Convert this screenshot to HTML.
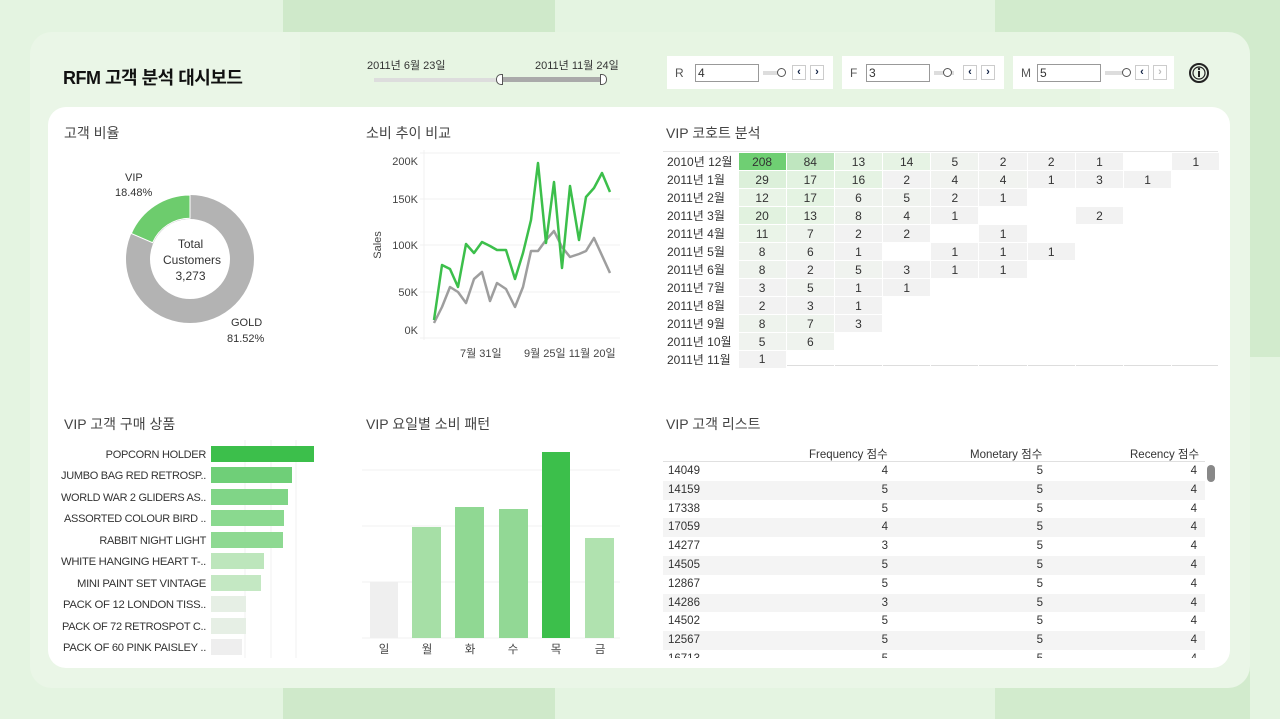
<!DOCTYPE html>
<html><head><meta charset="utf-8"><style>
*{margin:0;padding:0;box-sizing:border-box}
body{width:1280px;height:719px;overflow:hidden;position:relative;background:#dff1db;font-family:"Liberation Sans","Noto Sans CJK KR",sans-serif;color:#333}
.a{position:absolute}
.t{position:absolute;font-size:13px;color:#333;white-space:nowrap}
.h{position:absolute;font-size:14px;color:#444}
.ctrl{position:absolute;background:#fff;top:56px;height:33px}
.ctrl .l{position:absolute;left:8px;top:10px;font-size:12px;color:#555}
.ctrl .in{position:absolute;left:28px;top:8px;width:64px;height:18px;border:1px solid #999;font-size:12px;padding-left:2px;line-height:16px}
.ctrl .sl{position:absolute;left:96px;top:15px;width:20px;height:4px;background:#ddd}
.ctrl .kn{position:absolute;left:110px;top:12px;width:9px;height:9px;border:1px solid #555;border-radius:50%;background:#fff}
.ctrl .b{position:absolute;top:9px;width:14px;height:15px;border:1px solid #ccc;font-size:11px;text-align:center;line-height:13px;color:#124;font-weight:bold}
.coh td{width:48.2px;height:17.8px;text-align:center;font-size:12px;border:1px solid #fff;padding:0}
.coh td.lb{width:75px;text-align:left;padding-left:4px;background:#fff;border:none;border-top:1px solid #fff}
.coh{border-collapse:collapse;position:absolute;left:663px;top:152px}
</style></head><body>
<div class="a" style="left:283px;top:0;width:272px;height:719px;background:#cfe9ca"></div>
<div class="a" style="left:555px;top:0;width:440px;height:719px;background:#e4f4e1"></div>
<div class="a" style="left:995px;top:0;width:285px;height:719px;background:#d2ebcd"></div>
<div class="a" style="left:1250px;top:357px;width:30px;height:362px;background:#e4f4e1"></div>
<div class="a" style="left:0;top:0;width:283px;height:719px;background:#e4f4e1"></div>
<div class="a" style="left:30px;top:32px;width:1220px;height:656px;border-radius:22px;background:#eaf6e7"></div>
<div class="a" style="left:300px;top:32px;width:800px;height:75px;background:#e7f5e3"></div>
<div class="a" style="left:48px;top:107px;width:1182px;height:561px;border-radius:18px;background:#fff"></div>

<div class="t" style="left:63px;top:64px;font-size:18px;color:#111;font-weight:bold;letter-spacing:-0.5px">RFM 고객 분석 대시보드</div>
<div class="t" style="left:367px;top:57px;font-size:11px">2011년 6월 23일</div>
<div class="t" style="left:535px;top:57px;font-size:11px">2011년 11월 24일</div>
<div class="a" style="left:374px;top:78px;width:125px;height:4px;background:#ddd"></div>
<div class="a" style="left:499px;top:77px;width:104px;height:5px;background:#aaa"></div>
<div class="a" style="left:496px;top:74px;width:7px;height:11px;border:1px solid #555;border-radius:5px 0 0 5px;background:#fff"></div>
<div class="a" style="left:600px;top:74px;width:7px;height:11px;border:1px solid #555;border-radius:0 5px 5px 0;background:#fff"></div>

<div class="ctrl" style="left:667px;width:166px"><span class="l">R</span><div class="in">4</div><div class="sl"></div><div class="kn"></div><div class="b" style="left:125px">‹</div><div class="b" style="left:143px">›</div></div>
<div class="ctrl" style="left:842px;width:162px"><span class="l">F</span><div class="in" style="left:24px">3</div><div class="sl" style="left:92px"></div><div class="kn" style="left:101px"></div><div class="b" style="left:121px">‹</div><div class="b" style="left:139px">›</div></div>
<div class="ctrl" style="left:1013px;width:161px"><span class="l">M</span><div class="in" style="left:24px">5</div><div class="sl" style="left:92px"></div><div class="kn" style="left:109px"></div><div class="b" style="left:122px">‹</div><div class="b" style="left:140px;color:#bbb">›</div></div>
<svg class="a" style="left:1188px;top:62px" width="22" height="22"><circle cx="11" cy="11" r="9" fill="none" stroke="#222" stroke-width="2"/><circle cx="11" cy="11" r="6" fill="none" stroke="#222" stroke-width="1.2"/><rect x="10" y="9" width="2" height="6" fill="#222"/><circle cx="11" cy="7" r="1.2" fill="#222"/></svg>

<div class="h" style="left:64px;top:123px">고객 비율</div>
<div class="h" style="left:366px;top:123px">소비 추이 비교</div>
<div class="h" style="left:666px;top:123px">VIP 코호트 분석</div>
<div class="h" style="left:64px;top:414px">VIP 고객 구매 상품</div>
<div class="h" style="left:366px;top:414px">VIP 요일별 소비 패턴</div>
<div class="h" style="left:666px;top:414px">VIP 고객 리스트</div>

<svg class="a" style="left:0;top:0" width="400" height="400">
<circle cx="190" cy="259" r="52" fill="none" stroke="#b3b3b3" stroke-width="24"/>
<path d="M190 195 A64 64 0 0 0 131.3 233.5 L152.6 242.7 A40.8 40.8 0 0 1 190 218.2 Z" fill="#6dcc6d" stroke="#fff" stroke-width="1"/>
</svg>
<div class="t" style="left:125px;top:172px;font-size:11px">VIP</div>
<div class="t" style="left:115px;top:187px;font-size:11px">18.48%</div>
<div class="t" style="left:163px;top:236px;font-size:12px;text-align:center;width:55px;line-height:16px">Total<br>Customers<br>3,273</div>
<div class="t" style="left:231px;top:317px;font-size:11px">GOLD</div>
<div class="t" style="left:227px;top:333px;font-size:11px">81.52%</div>

<svg class="a" style="left:360px;top:140px" width="270" height="230" font-family="Liberation Sans,sans-serif" font-size="11" fill="#444">
<g stroke="#f0f0f0"><line x1="60" y1="13" x2="260" y2="13"/><line x1="60" y1="59" x2="260" y2="59"/><line x1="60" y1="105" x2="260" y2="105"/><line x1="60" y1="152" x2="260" y2="152"/><line x1="60" y1="198" x2="260" y2="198"/><line x1="64" y1="10" x2="64" y2="200"/></g>
<text x="58" y="25" text-anchor="end">200K</text><text x="58" y="63" text-anchor="end">150K</text><text x="58" y="109" text-anchor="end">100K</text><text x="58" y="156" text-anchor="end">50K</text><text x="58" y="194" text-anchor="end">0K</text>
<text transform="translate(21 105) rotate(-90)" text-anchor="middle">Sales</text>
<text x="100" y="217">7월 31일</text><text x="164" y="217">9월 25일 11월 20일</text>
<g transform="translate(-360 -140)" fill="none" stroke-width="2.5" stroke-linejoin="round">
<polyline stroke="#9e9e9e" points="434,323 442,307 450,287 458,292 466,303 474,279 482,272 490,301 497,283 506,289 515,307 523,287 531,251 538,251 546,240 554,231 562,247 570,257 579,254 586,251 594,238 610,273"/>
<polyline stroke="#3cbf4b" points="434,320 442,265 450,269 458,287 466,244 474,253 482,242 490,246 497,250 506,250 515,279 523,253 531,220 538,163 546,243 554,182 562,268 570,186 579,240 586,197 594,188 602,173 610,192"/>
</g>
</svg>

<div class="a" style="left:663px;top:151px;width:555px;height:1px;background:#e4e4e4"></div>
<div class="a" style="left:663px;top:365px;width:555px;height:1px;background:#ddd"></div>
<table class="coh">
<tr><td class="lb">2010년 12월</td><td style="background:#6fcf73">208</td><td style="background:#bfe6bf">84</td><td style="background:#e8f4e6">13</td><td style="background:#e6f3e4">14</td><td style="background:#f0f3ef">5</td><td style="background:#f2f2f2">2</td><td style="background:#f2f2f2">2</td><td style="background:#f2f2f2">1</td><td></td><td style="background:#f2f2f2">1</td></tr>
<tr><td class="lb">2011년 1월</td><td style="background:#dcf0da">29</td><td style="background:#e4f3e2">17</td><td style="background:#e5f3e3">16</td><td style="background:#f2f2f2">2</td><td style="background:#f1f3f0">4</td><td style="background:#f1f3f0">4</td><td style="background:#f2f2f2">1</td><td style="background:#f2f2f2">3</td><td style="background:#f2f2f2">1</td><td></td></tr>
<tr><td class="lb">2011년 2월</td><td style="background:#e9f4e7">12</td><td style="background:#e4f3e2">17</td><td style="background:#eff3ee">6</td><td style="background:#f0f3ef">5</td><td style="background:#f2f2f2">2</td><td style="background:#f2f2f2">1</td><td></td><td></td><td></td><td></td></tr>
<tr><td class="lb">2011년 3월</td><td style="background:#e1f2df">20</td><td style="background:#e8f4e6">13</td><td style="background:#eef3ed">8</td><td style="background:#f1f3f0">4</td><td style="background:#f2f2f2">1</td><td></td><td></td><td style="background:#f2f2f2">2</td><td></td><td></td></tr>
<tr><td class="lb">2011년 4월</td><td style="background:#eaf4e8">11</td><td style="background:#eef3ed">7</td><td style="background:#f2f2f2">2</td><td style="background:#f2f2f2">2</td><td></td><td style="background:#f2f2f2">1</td><td></td><td></td><td></td><td></td></tr>
<tr><td class="lb">2011년 5월</td><td style="background:#eef3ed">8</td><td style="background:#eff3ee">6</td><td style="background:#f2f2f2">1</td><td></td><td style="background:#f2f2f2">1</td><td style="background:#f2f2f2">1</td><td style="background:#f2f2f2">1</td><td></td><td></td><td></td></tr>
<tr><td class="lb">2011년 6월</td><td style="background:#eef3ed">8</td><td style="background:#f2f2f2">2</td><td style="background:#f0f3ef">5</td><td style="background:#f2f2f2">3</td><td style="background:#f2f2f2">1</td><td style="background:#f2f2f2">1</td><td></td><td></td><td></td><td></td></tr>
<tr><td class="lb">2011년 7월</td><td style="background:#f2f2f2">3</td><td style="background:#f0f3ef">5</td><td style="background:#f2f2f2">1</td><td style="background:#f2f2f2">1</td><td></td><td></td><td></td><td></td><td></td><td></td></tr>
<tr><td class="lb">2011년 8월</td><td style="background:#f2f2f2">2</td><td style="background:#f2f2f2">3</td><td style="background:#f2f2f2">1</td><td></td><td></td><td></td><td></td><td></td><td></td><td></td></tr>
<tr><td class="lb">2011년 9월</td><td style="background:#eef3ed">8</td><td style="background:#eef3ed">7</td><td style="background:#f2f2f2">3</td><td></td><td></td><td></td><td></td><td></td><td></td><td></td></tr>
<tr><td class="lb">2011년 10월</td><td style="background:#f0f3ef">5</td><td style="background:#eff3ee">6</td><td></td><td></td><td></td><td></td><td></td><td></td><td></td><td></td></tr>
<tr><td class="lb">2011년 11월</td><td style="background:#f2f2f2">1</td><td></td><td></td><td></td><td></td><td></td><td></td><td></td><td></td><td></td></tr>
</table>

<svg class="a" style="left:50px;top:440px" width="290" height="220" font-family="Liberation Sans,sans-serif" font-size="11" fill="#333">
<g stroke="#f0f0f0"><line x1="195" y1="0" x2="195" y2="218"/><line x1="221" y1="0" x2="221" y2="218"/><line x1="246" y1="0" x2="246" y2="218"/></g>
<rect x="161" y="6" width="103" height="16" fill="#3cbf4b"/>
<rect x="161" y="27" width="81" height="16" fill="#6fcf78"/>
<rect x="161" y="49" width="77" height="16" fill="#80d587"/>
<rect x="161" y="70" width="73" height="16" fill="#8ad98f"/>
<rect x="161" y="92" width="72" height="16" fill="#8ed992"/>
<rect x="161" y="113" width="53" height="16" fill="#bde6bc"/>
<rect x="161" y="135" width="50" height="16" fill="#c4e8c3"/>
<rect x="161" y="156" width="35" height="16" fill="#e6efe5"/>
<rect x="161" y="178" width="35" height="16" fill="#e6efe5"/>
<rect x="161" y="199" width="31" height="16" fill="#eeeeee"/>
<g text-anchor="end" letter-spacing="-0.3"><text x="156" y="18">POPCORN HOLDER</text><text x="156" y="39" textLength="145" lengthAdjust="spacingAndGlyphs">JUMBO BAG RED RETROSP..</text><text x="156" y="61" textLength="145" lengthAdjust="spacingAndGlyphs">WORLD WAR 2 GLIDERS AS..</text><text x="156" y="82" textLength="142" lengthAdjust="spacingAndGlyphs">ASSORTED COLOUR BIRD ..</text><text x="156" y="104">RABBIT NIGHT LIGHT</text><text x="156" y="125" textLength="145" lengthAdjust="spacingAndGlyphs">WHITE HANGING HEART T-..</text><text x="156" y="147" textLength="129" lengthAdjust="spacingAndGlyphs">MINI PAINT SET VINTAGE</text><text x="156" y="168" textLength="143" lengthAdjust="spacingAndGlyphs">PACK OF 12 LONDON TISS..</text><text x="156" y="190" textLength="144" lengthAdjust="spacingAndGlyphs">PACK OF 72 RETROSPOT C..</text><text x="156" y="211" textLength="143" lengthAdjust="spacingAndGlyphs">PACK OF 60 PINK PAISLEY ..</text></g>
</svg>

<svg class="a" style="left:360px;top:440px" width="270" height="225" font-family="Liberation Sans,Noto Sans CJK KR,sans-serif" font-size="11.5" fill="#444">
<g stroke="#f0f0f0"><line x1="2" y1="30" x2="260" y2="30"/><line x1="2" y1="86" x2="260" y2="86"/><line x1="2" y1="142" x2="260" y2="142"/><line x1="2" y1="198" x2="260" y2="198"/></g>
<rect x="10" y="142" width="28" height="56" fill="#efefef"/>
<rect x="52" y="87" width="29" height="111" fill="#a6dfa6"/>
<rect x="95" y="67" width="29" height="131" fill="#90d893"/>
<rect x="139" y="69" width="29" height="129" fill="#92d895"/>
<rect x="182" y="12" width="28" height="186" fill="#3cbf4b"/>
<rect x="225" y="98" width="29" height="100" fill="#b0e2af"/>
<g text-anchor="middle"><text x="24" y="213">일</text><text x="67" y="213">월</text><text x="110" y="213">화</text><text x="153" y="213">수</text><text x="196" y="213">목</text><text x="240" y="213">금</text></g>
</svg>

<div class="t" style="left:809px;top:446px;font-size:11.5px">Frequency 점수</div>
<div class="t" style="left:970px;top:446px;font-size:11.5px">Monetary 점수</div>
<div class="t" style="left:1130px;top:446px;font-size:11.5px">Recency 점수</div>
<div class="a" style="left:663px;top:461px;width:542px;height:1px;background:#e0e0e0"></div>
<div class="a" style="left:1207px;top:465px;width:8px;height:17px;border-radius:4px;background:#888"></div>
<div class="a" style="left:663px;top:462px;width:542px;height:196px;overflow:hidden;font-size:11.5px;color:#333">
<div style="position:relative">
<script>
var d=[["14049",4,5,4],["14159",5,5,4],["17338",5,5,4],["17059",4,5,4],["14277",3,5,4],["14505",5,5,4],["12867",5,5,4],["14286",3,5,4],["14502",5,5,4],["12567",5,5,4],["16713",5,5,4]];
var s="";d.forEach(function(r,i){s+='<div style="position:absolute;left:0;top:'+(i*18.8)+'px;width:542px;height:18.8px;line-height:18.8px;background:'+(i%2?'#f4f4f4':'#fff')+'"><span style="position:absolute;left:5px">'+r[0]+'</span><span style="position:absolute;right:317px">'+r[1]+'</span><span style="position:absolute;right:162px">'+r[2]+'</span><span style="position:absolute;right:8px">'+r[3]+'</span></div>';});document.write(s);
</script>
</div></div>
</body></html>
